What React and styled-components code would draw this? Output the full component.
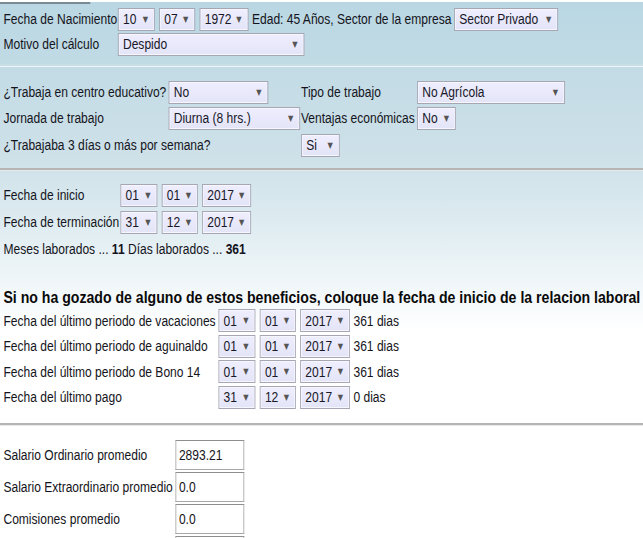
import React from 'react';
import styled, { createGlobalStyle } from 'styled-components';

// the reference is a horizontally squeezed capture, so the page is laid out
// at natural width and narrowed as a whole
const SQUEEZE = 0.86;

const GlobalStyle = createGlobalStyle`
  html, body {
    margin: 0;
    padding: 0;
    background: #fff;
    overflow: hidden;
  }
  body {
    font-family: "Liberation Sans", Arial, sans-serif;
    font-size: 14px;
    color: #141420;
  }
`;

const Page = styled.div`
  width: ${Math.ceil(643 / SQUEEZE)}px;
  height: 538px;
  overflow: hidden;
  position: relative;
  transform: scaleX(${SQUEEZE});
  transform-origin: 0 0;
  background: linear-gradient(#b9d7e3 0px, #cfe1e9 160px, #d8e8ee 200px, #f3f8fa 290px, #ffffff 330px);
  border-top: 2px solid transparent;
`;

const TabEdge = styled.div`
  position: absolute;
  left: 0;
  top: 0;
  width: 105px;
  height: 2px;
  background: #7a8a92;
`;

const Section = styled.div`
  padding: ${(p) => p.$pad || '6px 4px'};
  display: flex;
  flex-direction: column;
  gap: ${(p) => p.$gap || '2px'};
`;

const Row = styled.div`
  display: flex;
  align-items: center;
  height: ${(p) => p.$h || 24}px;
  white-space: nowrap;
`;

const Label = styled.span`
  display: inline-block;
  width: ${(p) => (p.$w ? `${p.$w}px` : 'auto')};
  flex: none;
`;

const Text = styled.span`
  margin: 0 ${(p) => p.$mx ?? 3}px;
`;

const Select = styled.span`
  box-sizing: border-box;
  display: inline-flex;
  align-items: center;
  justify-content: space-between;
  width: ${(p) => p.$w}px;
  height: 23px;
  margin-right: ${(p) => p.$mr ?? 5}px;
  margin-left: ${(p) => p.$ml ?? 0}px;
  padding: 0 7px 0 5px;
  flex: none;
  background: linear-gradient(#eeeefe, #e4e4f8);
  border: 1px solid #a7a7b4;
  box-shadow: inset 0 0 0 1px #f6f6ff;
  color: #181828;
  &::after {
    content: '▼';
    font-family: "DejaVu Sans", sans-serif;
    font-size: 8px;
    color: #555;
  }
`;

const Divider = styled.div`
  height: 2px;
  background: ${(p) => p.$color || '#b5b5b5'};
  border-bottom: 1px solid ${(p) => p.$light || '#e8e8e8'};
`;

const Heading = styled.h3`
  margin: 0;
  font-size: 16.4px;
  font-weight: bold;
  white-space: nowrap;
  color: #0a0a0a;
`;

const Input = styled.span`
  box-sizing: border-box;
  display: inline-flex;
  align-items: center;
  width: 80px;
  height: 30px;
  padding: 0 3px;
  background: #fff;
  border: 1px solid #a8a8a8;
  border-top-color: #8e8e8e;
`;

const Strong = styled.b`
  font-weight: bold;
`;

const DateSelects = ({ d, m, y, yw = 57 }) => (
  <>
    <Select $w={43}>{d}</Select>
    <Select $w={42}>{m}</Select>
    <Select $w={yw} $mr={4}>{y}</Select>
  </>
);

export default function App() {
  return (
    <Page>
      <GlobalStyle />
      <TabEdge />
      <Section $pad="5px 4px 8px" $gap="1px">
        <Row>
          <Label $w={133}>Fecha de Nacimiento</Label>
          <DateSelects d="10" m="07" y="1972" />
          <Text $mx={0}>Edad: 45 Años, Sector de la empresa</Text>
          <Select $w={121} $mr={0} $ml={3}>Sector Privado</Select>
        </Row>
        <Row>
          <Label $w={133}>Motivo del cálculo</Label>
          <Select $w={217}>Despido</Select>
        </Row>
      </Section>
      <Divider $color="#c9dde5" $light="#eef5f8" />
      <Section $pad="13px 4px 10px" $gap="2px">
        <Row>
          <Label $w={192}>¿Trabaja en centro educativo?</Label>
          <Select $w={116} $mr={38}>No</Select>
          <Label $w={135}>Tipo de trabajo</Label>
          <Select $w={172}>No Agrícola</Select>
        </Row>
        <Row>
          <Label $w={192}>Jornada de trabajo</Label>
          <Select $w={153} $mr={1}>Diurna (8 hrs.)</Select>
          <Label $w={135}>Ventajas económicas</Label>
          <Select $w={45}>No</Select>
        </Row>
        <Row $h={26}>
          <Label $w={346}>¿Trabajaba 3 días o más por semana?</Label>
          <Select $w={45}>Si</Select>
        </Row>
      </Section>
      <Divider />
      <Section $pad="12px 4px 10px" $gap="3px">
        <Row>
          <Label $w={136}>Fecha de inicio</Label>
          <DateSelects d="01" m="01" y="2017" />
        </Row>
        <Row>
          <Label $w={136}>Fecha de terminación</Label>
          <DateSelects d="31" m="12" y="2017" />
        </Row>
        <Row>
          <span>
            Meses laborados ... <Strong>11</Strong> Días laborados ... <Strong>361</Strong>
          </span>
        </Row>
      </Section>
      <Section $pad="17px 4px 14px" $gap="1.5px">
        <Heading>Si no ha gozado de alguno de estos beneficios, coloque la fecha de inicio de la relacion laboral</Heading>
        <Row>
          <Label $w={250}>Fecha del último periodo de vacaciones</Label>
          <DateSelects d="01" m="01" y="2017" yw={58} />
          <span>361 dias</span>
        </Row>
        <Row>
          <Label $w={250}>Fecha del último periodo de aguinaldo</Label>
          <DateSelects d="01" m="01" y="2017" yw={58} />
          <span>361 dias</span>
        </Row>
        <Row>
          <Label $w={250}>Fecha del último periodo de Bono 14</Label>
          <DateSelects d="01" m="01" y="2017" yw={58} />
          <span>361 dias</span>
        </Row>
        <Row>
          <Label $w={250}>Fecha del último pago</Label>
          <DateSelects d="31" m="12" y="2017" yw={58} />
          <span>0 dias</span>
        </Row>
      </Section>
      <Divider />
      <Section $pad="14px 4px" $gap="2px">
        <Row $h={30}>
          <Label $w={200}>Salario Ordinario promedio</Label>
          <Input>2893.21</Input>
        </Row>
        <Row $h={30}>
          <Label $w={200}>Salario Extraordinario promedio</Label>
          <Input>0.0</Input>
        </Row>
        <Row $h={30}>
          <Label $w={200}>Comisiones promedio</Label>
          <Input>0.0</Input>
        </Row>
        <Row $h={30}>
          <Label $w={200}>Total promedio</Label>
          <Input>2893.21</Input>
        </Row>
      </Section>
    </Page>
  );
}
